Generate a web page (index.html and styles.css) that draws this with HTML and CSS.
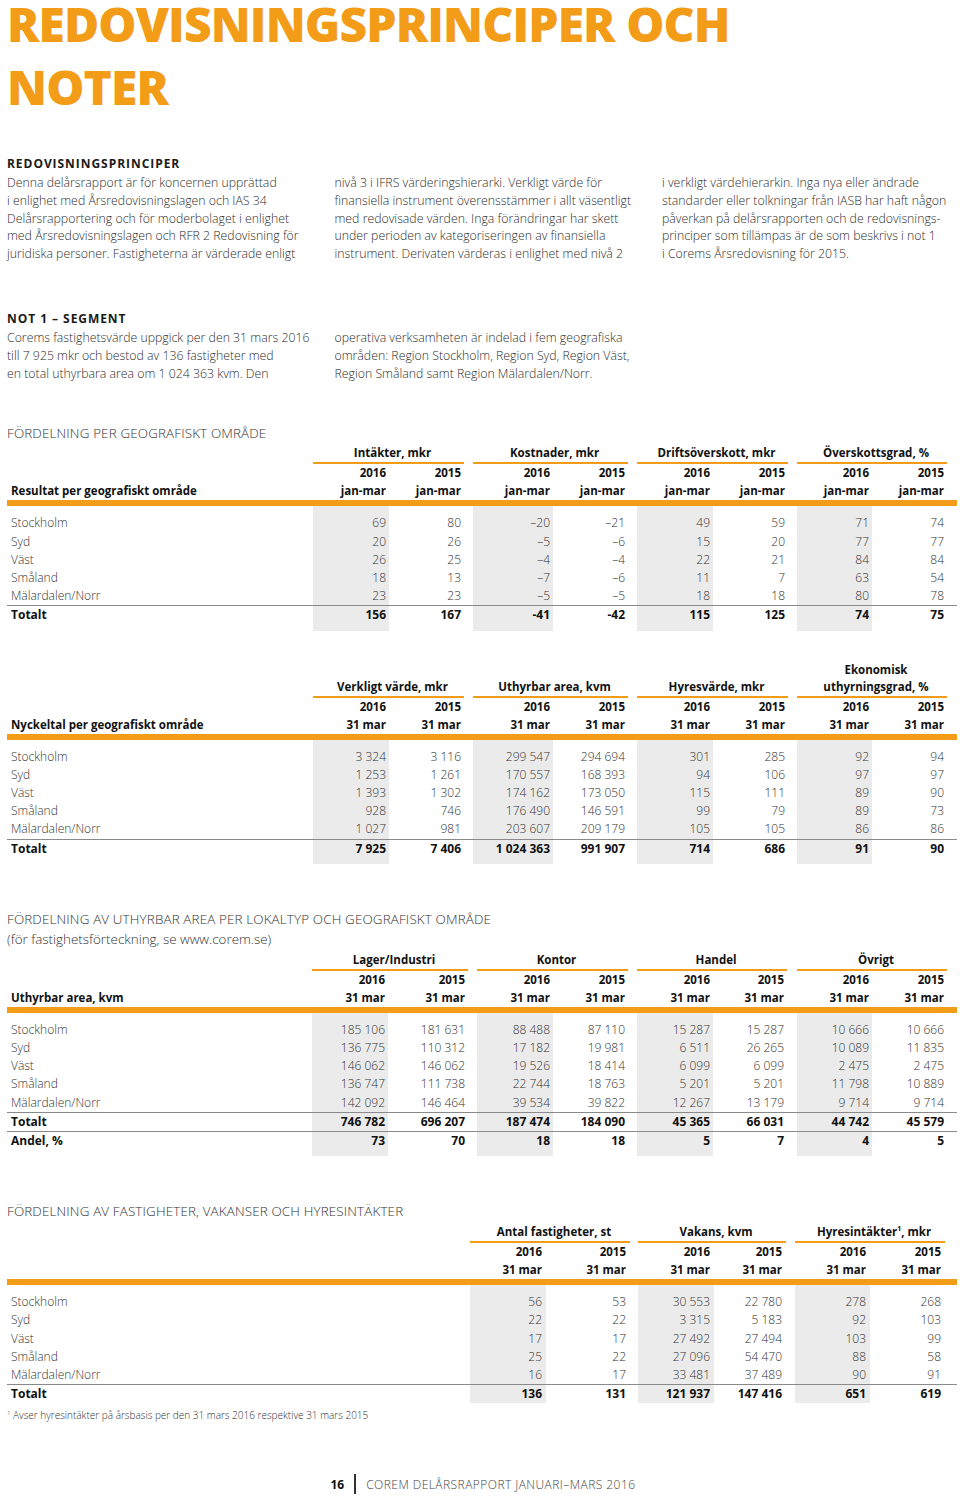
FILE: index.html
```html
<!DOCTYPE html>
<html lang="sv">
<head>
<meta charset="utf-8">
<title>Redovisningsprinciper och noter</title>
<link rel="stylesheet" href="styles.css">
</head>
<body>
<div class="page">
  <h1 class="title"><span class="tl">REDOVISNINGSPRINCIPER OCH</span><span class="tl tl-2">NOTER</span></h1>

  <h2 class="sec sec-first">REDOVISNINGSPRINCIPER</h2>
  <div class="cols">
    <p>Denna delårsrapport är för koncernen upprättad<br>i enlighet med Årsredovisningslagen och IAS 34<br>Delårsrapportering och för moderbolaget i enlighet<br>med Årsredovisningslagen och RFR 2 Redovisning för<br>juridiska personer. Fastigheterna är värderade enligt</p>
    <p>nivå 3 i IFRS värderingshierarki. Verkligt värde för<br>finansiella instrument överensstämmer i allt väsentligt<br>med redovisade värden. Inga förändringar har skett<br>under perioden av kategoriseringen av finansiella<br>instrument. Derivaten värderas i enlighet med nivå 2</p>
    <p>i verkligt värdehierarkin. Inga nya eller ändrade<br>standarder eller tolkningar från IASB har haft någon<br>påverkan på delårsrapporten och de redovisnings-<br>principer som tillämpas är de som beskrivs i not 1<br>i Corems Årsredovisning för 2015.</p>
  </div>

  <h2 class="sec sec-not">NOT 1 – SEGMENT</h2>
  <div class="cols">
    <p>Corems fastighetsvärde uppgick per den 31 mars 2016<br>till 7 925 mkr och bestod av 136 fastigheter med<br>en total uthyrbara area om 1 024 363 kvm. Den</p>
    <p>operativa verksamheten är indelad i fem geografiska<br>områden: Region Stockholm, Region Syd, Region Väst,<br>Region Småland samt Region Mälardalen/Norr.</p>
    <p></p>
  </div>

  <h3 class="cap cap-1">FÖRDELNING PER GEOGRAFISKT OMRÅDE</h3>
  <table class="tbl t1">
    <colgroup><col><col><col><col><col><col><col><col><col><col><col><col><col></colgroup>
    <thead>
      <tr class="g"><th></th><th colspan="2" class="gh">Intäkter, mkr</th><th></th><th colspan="2" class="gh">Kostnader, mkr</th><th></th><th colspan="2" class="gh">Driftsöverskott, mkr</th><th></th><th colspan="2" class="gh">Överskottsgrad, %</th><th></th></tr>
      <tr class="yr"><th></th><th>2016</th><th>2015</th><th></th><th>2016</th><th>2015</th><th></th><th>2016</th><th>2015</th><th></th><th>2016</th><th>2015</th><th></th></tr>
      <tr class="per"><th class="lbl">Resultat per geografiskt område</th><th>jan-mar</th><th>jan-mar</th><th></th><th>jan-mar</th><th>jan-mar</th><th></th><th>jan-mar</th><th>jan-mar</th><th></th><th>jan-mar</th><th>jan-mar</th><th></th></tr>
    </thead>
    <tbody>
      <tr><td class="lbl">Stockholm</td><td class="s">69</td><td>80</td><td></td><td class="s">–20</td><td>–21</td><td></td><td class="s">49</td><td>59</td><td></td><td class="s">71</td><td>74</td><td></td></tr>
      <tr><td class="lbl">Syd</td><td class="s">20</td><td>26</td><td></td><td class="s">–5</td><td>–6</td><td></td><td class="s">15</td><td>20</td><td></td><td class="s">77</td><td>77</td><td></td></tr>
      <tr><td class="lbl">Väst</td><td class="s">26</td><td>25</td><td></td><td class="s">–4</td><td>–4</td><td></td><td class="s">22</td><td>21</td><td></td><td class="s">84</td><td>84</td><td></td></tr>
      <tr><td class="lbl">Småland</td><td class="s">18</td><td>13</td><td></td><td class="s">–7</td><td>–6</td><td></td><td class="s">11</td><td>7</td><td></td><td class="s">63</td><td>54</td><td></td></tr>
      <tr><td class="lbl">Mälardalen/Norr</td><td class="s">23</td><td>23</td><td></td><td class="s">–5</td><td>–5</td><td></td><td class="s">18</td><td>18</td><td></td><td class="s">80</td><td>78</td><td></td></tr>
      <tr class="tot"><td class="lbl">Totalt</td><td class="s">156</td><td>167</td><td></td><td class="s">-41</td><td>-42</td><td></td><td class="s">115</td><td>125</td><td></td><td class="s">74</td><td>75</td><td></td></tr>
    </tbody>
  </table>

  <table class="tbl t2">
    <colgroup><col><col><col><col><col><col><col><col><col><col><col><col><col></colgroup>
    <thead>
      <tr class="g"><th></th><th colspan="2" class="gh">Verkligt värde, mkr</th><th></th><th colspan="2" class="gh">Uthyrbar area, kvm</th><th></th><th colspan="2" class="gh">Hyresvärde, mkr</th><th></th><th colspan="2" class="gh">Ekonomisk<br>uthyrningsgrad, %</th><th></th></tr>
      <tr class="yr"><th></th><th>2016</th><th>2015</th><th></th><th>2016</th><th>2015</th><th></th><th>2016</th><th>2015</th><th></th><th>2016</th><th>2015</th><th></th></tr>
      <tr class="per"><th class="lbl">Nyckeltal per geografiskt område</th><th>31 mar</th><th>31 mar</th><th></th><th>31 mar</th><th>31 mar</th><th></th><th>31 mar</th><th>31 mar</th><th></th><th>31 mar</th><th>31 mar</th><th></th></tr>
    </thead>
    <tbody>
      <tr><td class="lbl">Stockholm</td><td class="s">3 324</td><td>3 116</td><td></td><td class="s">299 547</td><td>294 694</td><td></td><td class="s">301</td><td>285</td><td></td><td class="s">92</td><td>94</td><td></td></tr>
      <tr><td class="lbl">Syd</td><td class="s">1 253</td><td>1 261</td><td></td><td class="s">170 557</td><td>168 393</td><td></td><td class="s">94</td><td>106</td><td></td><td class="s">97</td><td>97</td><td></td></tr>
      <tr><td class="lbl">Väst</td><td class="s">1 393</td><td>1 302</td><td></td><td class="s">174 162</td><td>173 050</td><td></td><td class="s">115</td><td>111</td><td></td><td class="s">89</td><td>90</td><td></td></tr>
      <tr><td class="lbl">Småland</td><td class="s">928</td><td>746</td><td></td><td class="s">176 490</td><td>146 591</td><td></td><td class="s">99</td><td>79</td><td></td><td class="s">89</td><td>73</td><td></td></tr>
      <tr><td class="lbl">Mälardalen/Norr</td><td class="s">1 027</td><td>981</td><td></td><td class="s">203 607</td><td>209 179</td><td></td><td class="s">105</td><td>105</td><td></td><td class="s">86</td><td>86</td><td></td></tr>
      <tr class="tot"><td class="lbl">Totalt</td><td class="s">7 925</td><td>7 406</td><td></td><td class="s">1 024 363</td><td>991 907</td><td></td><td class="s">714</td><td>686</td><td></td><td class="s">91</td><td>90</td><td></td></tr>
    </tbody>
  </table>

  <h3 class="cap cap-3">FÖRDELNING AV UTHYRBAR AREA PER LOKALTYP OCH GEOGRAFISKT OMRÅDE</h3>
  <p class="subcap">(för fastighetsförteckning, se www.corem.se)</p>
  <table class="tbl t3">
    <colgroup><col><col><col><col><col><col><col><col><col><col><col><col><col></colgroup>
    <thead>
      <tr class="g"><th></th><th colspan="2" class="gh">Lager/Industri</th><th></th><th colspan="2" class="gh">Kontor</th><th></th><th colspan="2" class="gh">Handel</th><th></th><th colspan="2" class="gh">Övrigt</th><th></th></tr>
      <tr class="yr"><th></th><th>2016</th><th>2015</th><th></th><th>2016</th><th>2015</th><th></th><th>2016</th><th>2015</th><th></th><th>2016</th><th>2015</th><th></th></tr>
      <tr class="per"><th class="lbl">Uthyrbar area, kvm</th><th>31 mar</th><th>31 mar</th><th></th><th>31 mar</th><th>31 mar</th><th></th><th>31 mar</th><th>31 mar</th><th></th><th>31 mar</th><th>31 mar</th><th></th></tr>
    </thead>
    <tbody>
      <tr><td class="lbl">Stockholm</td><td class="s">185 106</td><td>181 631</td><td></td><td class="s">88 488</td><td>87 110</td><td></td><td class="s">15 287</td><td>15 287</td><td></td><td class="s">10 666</td><td>10 666</td><td></td></tr>
      <tr><td class="lbl">Syd</td><td class="s">136 775</td><td>110 312</td><td></td><td class="s">17 182</td><td>19 981</td><td></td><td class="s">6 511</td><td>26 265</td><td></td><td class="s">10 089</td><td>11 835</td><td></td></tr>
      <tr><td class="lbl">Väst</td><td class="s">146 062</td><td>146 062</td><td></td><td class="s">19 526</td><td>18 414</td><td></td><td class="s">6 099</td><td>6 099</td><td></td><td class="s">2 475</td><td>2 475</td><td></td></tr>
      <tr><td class="lbl">Småland</td><td class="s">136 747</td><td>111 738</td><td></td><td class="s">22 744</td><td>18 763</td><td></td><td class="s">5 201</td><td>5 201</td><td></td><td class="s">11 798</td><td>10 889</td><td></td></tr>
      <tr><td class="lbl">Mälardalen/Norr</td><td class="s">142 092</td><td>146 464</td><td></td><td class="s">39 534</td><td>39 822</td><td></td><td class="s">12 267</td><td>13 179</td><td></td><td class="s">9 714</td><td>9 714</td><td></td></tr>
      <tr class="tot"><td class="lbl">Totalt</td><td class="s">746 782</td><td>696 207</td><td></td><td class="s">187 474</td><td>184 090</td><td></td><td class="s">45 365</td><td>66 031</td><td></td><td class="s">44 742</td><td>45 579</td><td></td></tr>
      <tr class="tot"><td class="lbl">Andel, %</td><td class="s">73</td><td>70</td><td></td><td class="s">18</td><td>18</td><td></td><td class="s">5</td><td>7</td><td></td><td class="s">4</td><td>5</td><td></td></tr>
    </tbody>
  </table>

  <h3 class="cap cap-4">FÖRDELNING AV FASTIGHETER, VAKANSER OCH HYRESINTÄKTER</h3>
  <table class="tbl t4">
    <colgroup><col><col><col><col><col><col><col><col><col><col></colgroup>
    <thead>
      <tr class="g"><th></th><th colspan="2" class="gh">Antal fastigheter, st</th><th></th><th colspan="2" class="gh">Vakans, kvm</th><th></th><th colspan="2" class="gh">Hyresintäkter<sup>1</sup>, mkr</th><th></th></tr>
      <tr class="yr"><th></th><th>2016</th><th>2015</th><th></th><th>2016</th><th>2015</th><th></th><th>2016</th><th>2015</th><th></th></tr>
      <tr class="per"><th class="lbl"></th><th>31 mar</th><th>31 mar</th><th></th><th>31 mar</th><th>31 mar</th><th></th><th>31 mar</th><th>31 mar</th><th></th></tr>
    </thead>
    <tbody>
      <tr><td class="lbl">Stockholm</td><td class="s">56</td><td>53</td><td></td><td class="s">30 553</td><td>22 780</td><td></td><td class="s">278</td><td>268</td><td></td></tr>
      <tr><td class="lbl">Syd</td><td class="s">22</td><td>22</td><td></td><td class="s">3 315</td><td>5 183</td><td></td><td class="s">92</td><td>103</td><td></td></tr>
      <tr><td class="lbl">Väst</td><td class="s">17</td><td>17</td><td></td><td class="s">27 492</td><td>27 494</td><td></td><td class="s">103</td><td>99</td><td></td></tr>
      <tr><td class="lbl">Småland</td><td class="s">25</td><td>22</td><td></td><td class="s">27 096</td><td>54 470</td><td></td><td class="s">88</td><td>58</td><td></td></tr>
      <tr><td class="lbl">Mälardalen/Norr</td><td class="s">16</td><td>17</td><td></td><td class="s">33 481</td><td>37 489</td><td></td><td class="s">90</td><td>91</td><td></td></tr>
      <tr class="tot"><td class="lbl">Totalt</td><td class="s">136</td><td>131</td><td></td><td class="s">121 937</td><td>147 416</td><td></td><td class="s">651</td><td>619</td><td></td></tr>
    </tbody>
  </table>
  <p class="note"><sup>1</sup> Avser hyresintäkter på årsbasis per den 31 mars 2016 respektive 31 mars 2015</p>

  <footer class="foot">
    <span class="pno">16</span>
    <span class="bar"></span>
    <span class="ftxt">COREM DELÅRSRAPPORT JANUARI–MARS 2016</span>
  </footer>
</div>
</body>
</html>
```

FILE: styles.css
```css
* { box-sizing: border-box; }

html, body {
  margin: 0;
  padding: 0;
  background: #fff;
}

body {
  font-family: "Open Sans", "Liberation Sans", sans-serif;
  color: #3a3a3a;
}

.page {
  width: 960px;
  padding: 0 3px 0 7px;
}

.title {
  margin: 0;
  font-family: "Open Sans", "Liberation Sans", sans-serif;
  font-weight: 800;
  font-size: 48px;
  line-height: 48px;
  letter-spacing: -0.9px;
  color: #f39c18;
}

.tl {
  display: block;
  white-space: nowrap;
}

.tl-2 { margin-top: 15px; }

.sec {
  margin: 0;
  font-size: 12px;
  line-height: 18px;
  font-weight: 700;
  letter-spacing: 0.95px;
  color: #1a1a1a;
}

.sec-first { margin-top: 44px; }
.sec-not { margin-top: 47px; }

.cols {
  display: grid;
  grid-template-columns: repeat(3, 293px);
  column-gap: 34.5px;
  padding-top: 1px;
}

.cols p {
  margin: 0;
  font-size: 12.3px;
  line-height: 17.8px;
  font-weight: 300;
  white-space: nowrap;
  color: #2e2e2e;
}

.cap {
  margin: 0;
  font-size: 13.4px;
  line-height: 18px;
  font-weight: 300;
  letter-spacing: 0.15px;
  color: #333;
  white-space: nowrap;
}

.cap-1 { margin-top: 42px; }
.cap-3 { margin-top: 46px; }
.cap-4 { margin-top: 46px; }

.subcap {
  margin: 0;
  font-size: 13.4px;
  line-height: 22px;
  font-weight: 300;
  color: #333;
}

/* tables */
.tbl {
  width: 950px;
  table-layout: fixed;
  border-collapse: separate;
  border-spacing: 0;
  font-size: 12px;
}

.t1 { margin-top: 2px; }
.t2 { margin-top: 30px; }
.t3 { margin-top: 1px; }
.t4 { margin-top: 3px; }

.tbl th {
  padding: 0 3px 0 0;
  text-align: right;
  font-size: 11.5px;
  font-weight: 700;
  color: #111;
  line-height: 18px;
  white-space: nowrap;
}

.tbl .g th {
  vertical-align: bottom;
  line-height: 17px;
}

.tbl .g th.gh {
  text-align: center;
  padding: 0 0 1px 8px;
  border-bottom: 2px solid #f39c18;
}

.tbl .per th {
  border-bottom: 6px solid #f39c18;
}

.tbl th.lbl,
.tbl td.lbl {
  text-align: left;
  padding-left: 4px;
}

.tbl td {
  padding: 0 3px 0 0;
  text-align: right;
  line-height: 18.2px;
  font-weight: 300;
  color: #333;
  white-space: nowrap;
}

.tbl td.s { background: #ebebeb; }

.tbl tbody tr:first-child td { padding-top: 8px; }
.tbl tbody tr:last-child td { padding-bottom: 6px; }
.t4 tbody tr:last-child td { padding-bottom: 0; }

.tbl tr.tot td {
  border-top: 1px solid #8a8a8a;
  font-weight: 700;
  color: #111;
}

.tbl sup {
  font-size: 7px;
  line-height: 0;
  vertical-align: 5px;
}

/* column widths */
.t1 col:nth-child(1), .t2 col:nth-child(1) { width: 306px; }
.t1 col:nth-child(2), .t2 col:nth-child(2) { width: 76px; }
.t1 col:nth-child(3), .t2 col:nth-child(3) { width: 75px; }
.t1 col:nth-child(4), .t2 col:nth-child(4) { width: 9px; }
.t1 col:nth-child(5), .t2 col:nth-child(5) { width: 80px; }
.t1 col:nth-child(6), .t2 col:nth-child(6) { width: 75px; }
.t1 col:nth-child(7), .t2 col:nth-child(7) { width: 9px; }
.t1 col:nth-child(8), .t2 col:nth-child(8) { width: 76px; }
.t1 col:nth-child(9), .t2 col:nth-child(9) { width: 75px; }
.t1 col:nth-child(10), .t2 col:nth-child(10) { width: 9px; }
.t1 col:nth-child(11), .t2 col:nth-child(11) { width: 75px; }
.t1 col:nth-child(12), .t2 col:nth-child(12) { width: 75px; }
.t1 col:nth-child(13), .t2 col:nth-child(13) { width: 10px; }

.t3 col:nth-child(1) { width: 305px; }
.t3 col:nth-child(2) { width: 76px; }
.t3 col:nth-child(3) { width: 80px; }
.t3 col:nth-child(4) { width: 9px; }
.t3 col:nth-child(5) { width: 76px; }
.t3 col:nth-child(6) { width: 75px; }
.t3 col:nth-child(7) { width: 9px; }
.t3 col:nth-child(8) { width: 76px; }
.t3 col:nth-child(9) { width: 74px; }
.t3 col:nth-child(10) { width: 10px; }
.t3 col:nth-child(11) { width: 75px; }
.t3 col:nth-child(12) { width: 75px; }
.t3 col:nth-child(13) { width: 10px; }

.t4 col:nth-child(1) { width: 463px; }
.t4 col:nth-child(2) { width: 76px; }
.t4 col:nth-child(3) { width: 84px; }
.t4 col:nth-child(4) { width: 8px; }
.t4 col:nth-child(5) { width: 76px; }
.t4 col:nth-child(6) { width: 72px; }
.t4 col:nth-child(7) { width: 9px; }
.t4 col:nth-child(8) { width: 75px; }
.t4 col:nth-child(9) { width: 75px; }
.t4 col:nth-child(10) { width: 12px; }

.t4 td { padding-right: 4px; }
.t4 th { padding-right: 4px; }

.note {
  margin: 3px 0 0 0;
  font-size: 10px;
  line-height: 18px;
  font-weight: 300;
  color: #333;
}

.note sup {
  font-size: 6px;
  line-height: 0;
  vertical-align: 4px;
}

.foot {
  margin-top: 50px;
  height: 20px;
  display: flex;
  align-items: center;
  justify-content: center;
  padding-left: 2px;
}

.pno {
  font-size: 12px;
  font-weight: 700;
  color: #111;
}

.bar {
  width: 2px;
  height: 20px;
  background: #333;
  margin: 0 10px;
}

.ftxt {
  font-size: 12px;
  font-weight: 300;
  letter-spacing: 0.45px;
  color: #444;
}
```
